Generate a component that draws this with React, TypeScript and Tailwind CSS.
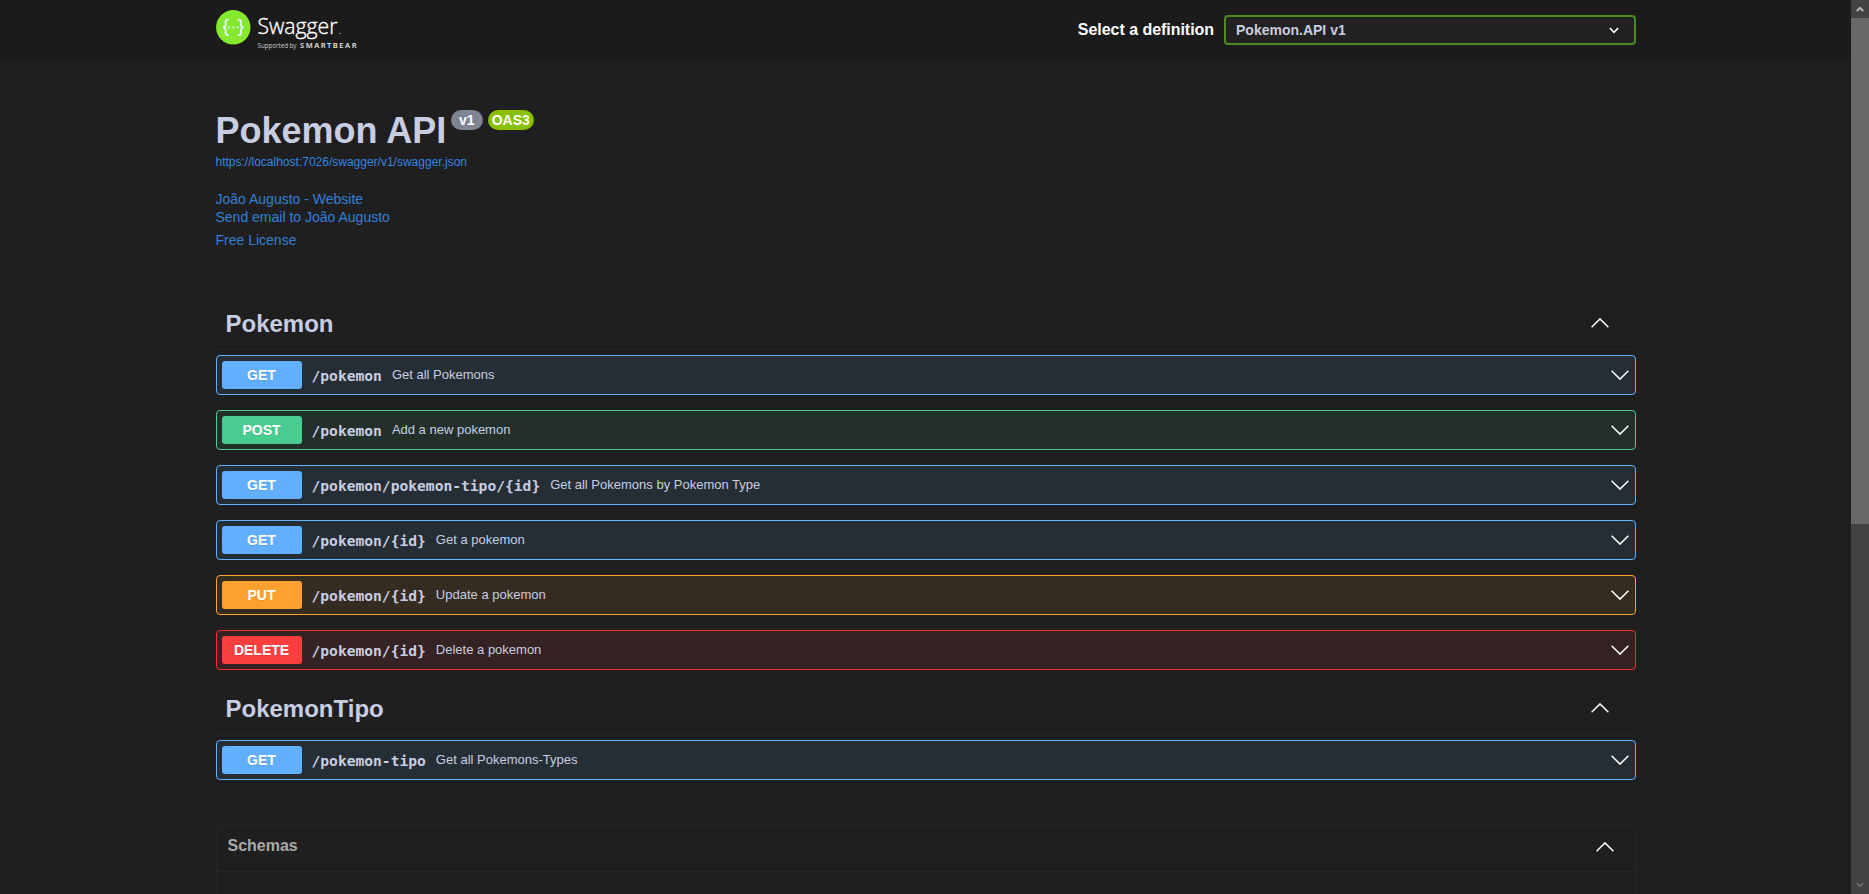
type Method = 'GET' | 'POST' | 'PUT' | 'DELETE';

interface Operation {
  method: Method;
  path: string;
  summary: string;
}

const styles: Record<Method, { row: string; badge: string }> = {
  GET: { row: 'border-[#61affe] bg-[#262e35]', badge: 'bg-[#61affe]' },
  POST: { row: 'border-[#49cc90] bg-[#23302a]', badge: 'bg-[#49cc90]' },
  PUT: { row: 'border-[#fca130] bg-[#352c21]', badge: 'bg-[#fca130]' },
  DELETE: { row: 'border-[#f12f34] bg-[#352222]', badge: 'bg-[#f93e3e]' },
};

const pokemon: Operation[] = [
  { method: 'GET', path: '/pokemon', summary: 'Get all Pokemons' },
  { method: 'POST', path: '/pokemon', summary: 'Add a new pokemon' },
  { method: 'GET', path: '/pokemon/pokemon-tipo/{id}', summary: 'Get all Pokemons by Pokemon Type' },
  { method: 'GET', path: '/pokemon/{id}', summary: 'Get a pokemon' },
  { method: 'PUT', path: '/pokemon/{id}', summary: 'Update a pokemon' },
  { method: 'DELETE', path: '/pokemon/{id}', summary: 'Delete a pokemon' },
];

const pokemonTipo: Operation[] = [
  { method: 'GET', path: '/pokemon-tipo', summary: 'Get all Pokemons-Types' },
];

function Chevron({ up = false, className = '' }: { up?: boolean; className?: string }) {
  return (
    <svg width="18" height="10" viewBox="0 0 18 10" fill="none" stroke="#fff" strokeWidth="1.5" className={`shrink-0 ${className}`}>
      <path d={up ? 'M.6 9.2 9 .9l8.4 8.3' : 'M.6.8 9 9.1 17.4.8'} />
    </svg>
  );
}

function Logo() {
  return (
    <svg width="150" height="60" viewBox="0 0 150 60" className="shrink-0">
      <circle cx="17.3" cy="27.3" r="17.2" fill="#85ea2d" />
      <g fill="none" stroke="#dcf3f5" strokeWidth="1.9">
        <path d="M12.8 19.6h-.9c-1.7 0-2.3.8-2.3 2.3v2.7c0 1.7-.8 2.6-2.6 2.7 1.8.1 2.6 1 2.6 2.7v2.7c0 1.5.6 2.3 2.3 2.3h.9" />
        <path d="M21.8 19.6h.9c1.7 0 2.3.8 2.3 2.3v2.7c0 1.7.8 2.6 2.6 2.7-1.8.1-2.6 1-2.6 2.7v2.7c0 1.5-.6 2.3-2.3 2.3h-.9" />
      </g>
      <g fill="#dcf3f5">
        <circle cx="13" cy="27.3" r="1.1" />
        <circle cx="17.3" cy="27.3" r="1.1" />
        <circle cx="21.6" cy="27.3" r="1.1" />
      </g>
      <text x="41.5" y="34" fontSize="21.5" fontWeight="300" textLength="80" lengthAdjust="spacingAndGlyphs" fill="#fff" stroke="#fff" strokeWidth=".35" className="font-['Open_Sans',sans-serif]">Swagger</text>
      <rect x="123" y="33" width="2.5" height="1" fill="#777" />
      <text x="41.5" y="48.3" fontSize="6.3" textLength="39" fill="#ccc" className="font-['Open_Sans',sans-serif]">Supported by</text>
      <text x="84" y="48.3" fontSize="7.6" fontWeight="600" textLength="56.5" fill="#eee" className="font-['Open_Sans',sans-serif]">SMARTBEAR</text>
    </svg>
  );
}

function OperationRow({ method, path, summary }: Operation) {
  const s = styles[method];
  return (
    <div className={`flex h-10 items-center rounded border px-[5px] ${s.row}`}>
      <span className={`flex h-7 w-20 items-center justify-center rounded-[3px] text-sm font-bold text-white [text-shadow:0_1px_0_rgba(0,0,0,.1)] ${s.badge}`}>
        {method}
      </span>
      <span className="pt-[2px] pl-2.5 font-['DejaVu_Sans_Mono',monospace] text-[14.62px] leading-5 font-bold">{path}</span>
      <span className="pl-2.5 text-[13px] leading-4">{summary}</span>
      <Chevron className="mr-[1px] ml-auto" />
    </div>
  );
}

function TagSection({ name, operations }: { name: string; operations: Operation[] }) {
  return (
    <section>
      <div className="flex h-[50px] items-center justify-between border-b border-[#262626] pr-[26.5px] pl-2.5">
        <h2 className="pb-[2px] text-2xl leading-7 font-bold">{name}</h2>
        <Chevron up className="mb-1" />
      </div>
      <div className="mt-[5px] flex flex-col gap-[15px]">
        {operations.map((op) => (
          <OperationRow key={op.method + op.path} {...op} />
        ))}
      </div>
    </section>
  );
}

export default function App() {
  return (
    <div className="flex h-[894px] w-full overflow-hidden bg-[#1f1f1f] font-['Liberation_Sans',sans-serif] text-[#c8cde2]">
      <div className="flex-1 overflow-hidden">
        <header className="h-[60px] bg-[#1b1b1b]">
          <div className="ml-[216px] flex h-full w-[1420px] items-center justify-between">
            <Logo />
            <div className="flex items-center">
              <label className="mr-2.5 text-base leading-5 font-bold tracking-[-0.04px] text-white">Select a definition</label>
              <div className="flex h-[30px] w-[412px] items-center justify-between rounded border-2 border-[#4b8a25] bg-[#212121] pr-[15px] pl-2.5">
                <span className="text-sm leading-4 font-bold">Pokemon.API v1</span>
                <svg width="10" height="7" viewBox="0 0 10 7" fill="none" stroke="#fff" strokeWidth="1.6">
                  <path d="m.8 1 4.2 4.300L9.200 1" />
                </svg>
              </div>
            </div>
          </div>
        </header>

        <main className="ml-[215.5px] w-[1420px]">
          <div className="flex items-start pt-[50px]">
            <h1 className="h-10 text-4xl leading-[42px] font-bold">Pokemon API</h1>
            <span className="ml-[4.500px] flex h-5 w-8 items-center justify-center rounded-full bg-[#7d8492] text-sm font-bold text-white">v1</span>
            <span className="ml-[5px] flex h-5 w-[46px] items-center justify-center rounded-full bg-[#89bf04] text-sm font-bold text-white">OAS3</span>
          </div>
          <a className="mt-1 block text-xs leading-4 text-[#3486e0]">https://localhost:7026/swagger/v1/swagger.json</a>
          <div className="mt-5 flex flex-col text-sm leading-[18px] text-[#3480d6]">
            <a>João Augusto - Website</a>
            <a>Send email to João Augusto</a>
            <a className="mt-[5px]">Free License</a>
          </div>

          <div className="mt-[51px] flex flex-col gap-[15px]">
            <TagSection name="Pokemon" operations={pokemon} />
            <TagSection name="PokemonTipo" operations={pokemonTipo} />
          </div>

          <section className="mt-[45px] h-[200px] rounded border border-[#262626]">
            <div className="flex h-[46px] items-center justify-between border-b border-[#262626] pr-[21px] pl-[11px]">
              <h3 className="pb-[5px] text-base leading-5 font-bold text-[#a9a9a9]">Schemas</h3>
              <Chevron up className="mb-[3px]" />
            </div>
          </section>
        </main>
      </div>

      <div className="flex w-[18px] shrink-0 flex-col bg-[#424242]">
        <div className="flex h-[18px] items-center justify-center">
          <svg width="8" height="6" viewBox="0 0 8 6" fill="none" stroke="#b5b5b5" strokeWidth="2"><path d="M.8 5 4 1.800 7.200 5" /></svg>
        </div>
        <div className="h-[506px] bg-[#686868]" />
        <div className="mt-auto flex h-[18px] items-center justify-center">
          <svg width="8" height="6" viewBox="0 0 8 6" fill="none" stroke="#686868" strokeWidth="2"><path d="M.8 1 4 4.200 7.200 1" /></svg>
        </div>
      </div>
    </div>
  );
}
